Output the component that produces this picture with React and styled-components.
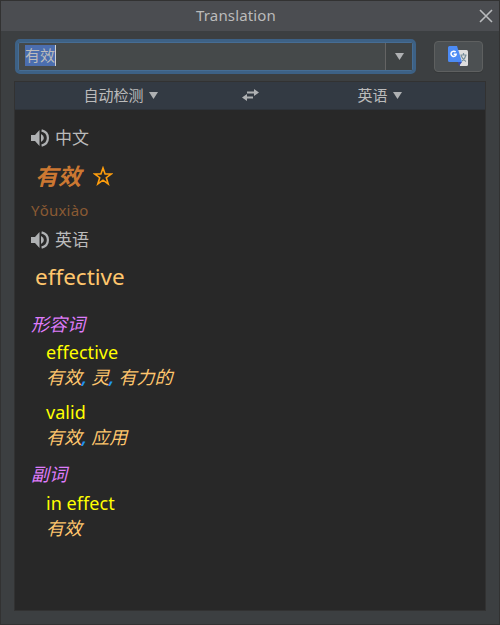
import React from "react";
import styled, { createGlobalStyle } from "styled-components";

const GlobalStyle = createGlobalStyle`
  * { box-sizing: border-box; }
  html, body { margin: 0; background: #3c3f41; }
  body { font-family: "Noto Sans", "Noto Sans CJK SC", sans-serif; color: #bbbbbb; }
`;

const Window = styled.main`
  width: 500px;
  height: 625px;
  display: flex;
  flex-direction: column;
  overflow: hidden;
  background: #3c3f41;
  border: 1px solid #323232;
`;

const TitleBar = styled.header`
  height: 30px;
  flex: none;
  display: grid;
  grid-template-columns: 28px 1fr 28px;
  align-items: center;
  background: #4b4d51;
`;

const Title = styled.h1`
  grid-column: 2;
  margin: 0;
  padding: 0 28px 2px 0;
  text-align: center;
  font-size: 15px;
  line-height: 26px;
  font-weight: 400;
  letter-spacing: 0.15px;
`;

const CloseButton = styled.button`
  width: 28px;
  height: 30px;
  padding: 0 0 0 2px;
  border: 0;
  background: none;
  display: flex;
  align-items: center;
  justify-content: center;
`;

const SearchRow = styled.div`
  height: 50px;
  flex: none;
  display: flex;
  padding: 8px 16px 0 14px;
  align-items: flex-start;
  justify-content: space-between;
`;

const ComboBox = styled.div`
  width: 401px;
  height: 35px;
  display: flex;
  border: 3px solid #3d6185;
  border-radius: 5px;
  background: #45494a;
  box-shadow: inset 0 0 0 1px #466d94;
`;

const Field = styled.div`
  flex: 1;
  padding: 3px 0 0 7px;
  display: flex;
`;

const Selection = styled.span`
  height: 21px;
  line-height: 20px;
  font-size: 15px;
  background: #4b6eaf;
  border-right: 1px solid #d0d0d0;
`;

const DropButton = styled.div`
  width: 27px;
  margin: 1px;
  border-left: 1px solid #646464;
  background: #3f4344;
  display: flex;
  align-items: center;
  justify-content: center;
`;

const EngineButton = styled.button`
  width: 49px;
  height: 31px;
  margin-top: 2px;
  padding: 0 2px 2px 0;
  border: 1px solid #5e6060;
  border-radius: 4px;
  background: #4c5052;
  box-shadow: 0 1px 0 #36393a;
  display: flex;
  align-items: center;
  justify-content: center;
`;

const Panel = styled.section`
  width: 472px;
  height: 530px;
  margin-left: 13px;
  border: 1px solid #323232;
  background: #282828;
`;

const LanguageBar = styled.div`
  height: 28px;
  display: grid;
  grid-template-columns: 211px 48px 211px;
  align-items: center;
  justify-items: center;
  background: #333a43;
  border-bottom: 1px solid #2e3339;
`;

const Language = styled.div`
  display: flex;
  align-items: center;
  gap: 5px;
  font-size: 15px;
  line-height: 25px;
  padding-bottom: 1px;
`;

const SwapIcon = styled.svg`
  margin-bottom: 2px;
`;

const Results = styled.div`
  display: flex;
  flex-direction: column;
  padding: 14px 16px 0;
`;

const SpeechRow = styled.div`
  height: 28px;
  display: flex;
  align-items: center;
  gap: 6px;
  font-size: 17px;
  line-height: 28px;
`;

const SourceRow = styled.div`
  height: 46px;
  display: flex;
  align-items: center;
  gap: 12px;
  padding: 2px 0 0 4px;
`;

const SourceWord = styled.strong`
  font-size: 23px;
  line-height: 40px;
  font-style: italic;
  color: #cc7832;
`;

const Phonetic = styled.div`
  height: 28px;
  font-size: 15px;
  line-height: 24px;
  letter-spacing: 0.2px;
  color: #8a5a33;
`;

const Translation = styled.div`
  height: 57px;
  padding-left: 4px;
  font-size: 22.5px;
  line-height: 46px;
  color: #ffc66d;
`;

const PartOfSpeech = styled.div`
  height: 27px;
  margin-top: ${(p) => p.$top || 0}px;
  font-size: 18px;
  line-height: 26px;
  font-style: italic;
  color: #df7cfb;
`;

const Term = styled.div`
  height: 26px;
  margin-top: ${(p) => p.$top || 0}px;
  padding-left: 15px;
  font-size: 18px;
  line-height: 28px;
  letter-spacing: 0.05px;
  color: #ffff00;
`;

const Meanings = styled.div`
  height: 26px;
  padding-left: 15px;
  font-size: 18px;
  line-height: 26px;
  font-style: italic;
  white-space: pre;
  color: #ffc66d;
`;

const Comma = styled.span`
  font-weight: 600;
  letter-spacing: -0.2px;
  color: #2196f3;
`;

const Triangle = ({ width = 9, height = 7 }) => (
  <svg width={width} height={height} viewBox="0 0 9 7">
    <path d="M0 0h9L4.5 7z" fill="#afb1b3" />
  </svg>
);

const Speaker = () => (
  <svg width="18" height="18" viewBox="0 0 18 18">
    <path d="M0 6h4l4.500-5v16L4 12H0z" fill="#afb1b3" />
    <path d="M10 5Q12.900 6.400 12.900 9T10 13z" fill="#afb1b3" />
    <path d="M10.600 1.400Q16.900 3 16.900 9T10.600 16.600" fill="none" stroke="#afb1b3" strokeWidth="2.200" />
  </svg>
);

const Star = () => (
  <svg width="20" height="20" viewBox="0 0 20 20">
    <path d="M10 2l2.100 6h6.200l-5 3.700 1.900 6.200L10 14.200l-5.200 3.700 1.900-6.200-5-3.700h6.200z" fill="none" stroke="#ff9e0d" strokeWidth="1.600" />
  </svg>
);

const TranslateLogo = () => (
  <svg width="20" height="20" viewBox="0 0 20 20">
    <path d="M9 4h9.500A1.500 1.500 0 0 1 20 5.500v13a1.500 1.500 0 0 1-1.500 1.500H12z" fill="#dedede" />
    <path d="M10 16h4l-3 4z" fill="#3949ab" />
    <path d="M12.500 9h6M15.500 7v2M18 9q-1 4-4 6M13 9.500q1.500 4 5 6" fill="none" stroke="#78909c" strokeWidth="1.200" />
    <path d="M1.500 0H9l5 16H1.500A1.500 1.500 0 0 1 0 14.500V1.500A1.500 1.500 0 0 1 1.500 0z" fill="#4c8bf5" />
    <path d="M7.600 6.100A2.600 2.600 0 1 0 8.200 8.200H5.700" fill="none" stroke="#fff" strokeWidth="1.500" />
  </svg>
);

const entries = [
  { part: "形容词", terms: [["effective", ["有效", "灵", "有力的"]], ["valid", ["有效", "应用"]]] },
  { part: "副词", terms: [["in effect", ["有效"]]] },
];

export default function App() {
  return (
    <Window>
      <GlobalStyle />
      <TitleBar>
        <Title>Translation</Title>
        <CloseButton aria-label="Close">
          <svg width="14" height="14" viewBox="0 0 14 14">
            <path d="M1 1l12 12M13 1L1 13" stroke="#b9bbbd" strokeWidth="1.600" />
          </svg>
        </CloseButton>
      </TitleBar>
      <SearchRow>
        <ComboBox>
          <Field><Selection>有效</Selection></Field>
          <DropButton><Triangle width={11} height={7} /></DropButton>
        </ComboBox>
        <EngineButton aria-label="Translation engine"><TranslateLogo /></EngineButton>
      </SearchRow>
      <Panel>
        <LanguageBar>
          <Language>自动检测<Triangle /></Language>
          <SwapIcon width="17" height="12" viewBox="0 0 17 12">
            <path d="M5 3.500h9M3 8.500h8" fill="none" stroke="#afb1b3" strokeWidth="1.800" />
            <path d="M12 0l5 3.500-5 3.500zM5 5L0 8.500 5 12z" fill="#afb1b3" />
          </SwapIcon>
          <Language>英语<Triangle /></Language>
        </LanguageBar>
        <Results>
          <SpeechRow><Speaker />中文</SpeechRow>
          <SourceRow><SourceWord>有效</SourceWord><Star /></SourceRow>
          <Phonetic>Yǒuxiào</Phonetic>
          <SpeechRow><Speaker />英语</SpeechRow>
          <Translation>effective</Translation>
          {entries.map((entry, i) => (
            <React.Fragment key={entry.part}>
              <PartOfSpeech $top={i ? 11 : 0}>{entry.part}</PartOfSpeech>
              {entry.terms.map(([term, meanings], j) => (
                <React.Fragment key={term}>
                  <Term $top={j ? 8 : i}>{term}</Term>
                  <Meanings>
                    {meanings.map((m, k) => (
                      <React.Fragment key={m}>{k > 0 && <Comma>, </Comma>}{m}</React.Fragment>
                    ))}
                  </Meanings>
                </React.Fragment>
              ))}
            </React.Fragment>
          ))}
        </Results>
      </Panel>
    </Window>
  );
}
